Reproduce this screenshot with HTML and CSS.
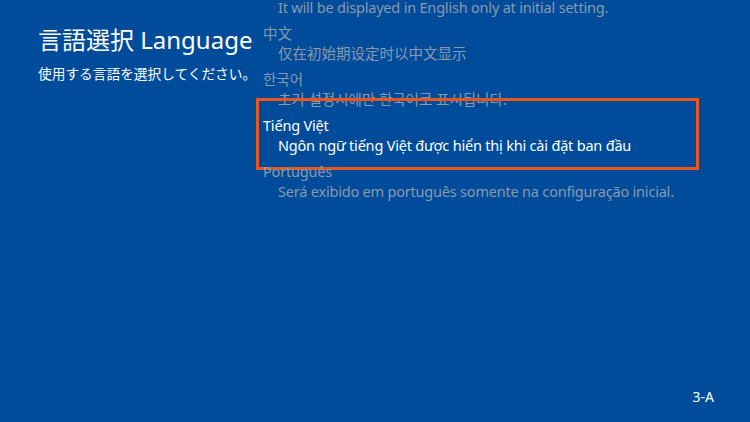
FILE: index.html
```html
<!DOCTYPE html>
<html lang="ja">
<head>
    <meta charset="UTF-8">
    <title>言語選択 Language</title>
    <link rel="stylesheet" href="styles.css">
</head>
<body>
<div class="screen">
    <div class="main">
        <div class="side">
            <h1 class="title">言語選択 Language</h1>
            <p class="lead">使用する言語を選択してください。</p>
        </div>
        <ul class="lang-list">
            <li class="lang latin">
                <h4>English</h4>
                <p>It will be displayed in English only at initial setting.</p>
            </li>
            <li class="lang zh" lang="zh-CN">
                <h4>中文</h4>
                <p>仅在初始期设定时以中文显示</p>
            </li>
            <li class="lang" lang="ko">
                <h4>한국어</h4>
                <p>초기 설정시에만 한국어로 표시됩니다.</p>
            </li>
            <li class="lang latin active" lang="vi">
                <h4>Tiếng Việt</h4>
                <p>Ngôn ngữ tiếng Việt được hiển thị khi cài đặt ban đầu</p>
            </li>
            <li class="lang latin" lang="pt">
                <h4>Português</h4>
                <p>Será exibido em português somente na configuração inicial.</p>
            </li>
        </ul>
    </div>
    <div class="page-no">3-A</div>
</div>
</body>
</html>
```

FILE: styles.css
```css
/*reset*/
body,h1,h4,p,ul,li{
    padding: 0;
    margin: 0;
}
ul{
    list-style: none;
}
/*public*/
html{
    font-size: 15px;
}
body{
    font-family: "Noto Sans","Noto Sans CJK JP",sans-serif;
    background: #004c9b;
    color: #fff;
    overflow: hidden;
}
.screen{
    height: 422px;
    display: flex;
    flex-direction: column;
}
.main{
    flex: 1;
    display: flex;
    overflow: hidden;
}
.side{
    width: 225px;
    padding: 24px 0 0 38px;
}
.title{
    font-size: 24px;
    font-weight: normal;
    line-height: 32px;
    white-space: nowrap;
}
.lead{
    font-size: 13.7px;
    line-height: 20px;
    margin-top: 8px;
    white-space: nowrap;
}
.lang-list{
    margin-top: -23px;
}
.lang{
    position: relative;
    margin-bottom: 6px;
    color: #8b99ad;
}
.lang h4,
.lang p{
    font-weight: normal;
    font-size: 14.5px;
    line-height: 20px;
    white-space: nowrap;
}
.lang.zh{
    font-family: "Noto Sans","Noto Sans CJK SC",sans-serif;
}
.lang.latin h4,
.lang.latin p{
    letter-spacing: -0.2px;
}
.lang p{
    padding-left: 15px;
}
.lang.active{
    color: #fff;
}
.lang.active::after{
    content: "";
    position: absolute;
    left: -7px;
    top: -17px;
    bottom: -15px;
    width: 437px;
    border: 3px solid #e9561b;
}
.page-no{
    align-self: flex-end;
    font-size: 14px;
    line-height: 20px;
    padding: 0 36px 15px 0;
}
```
